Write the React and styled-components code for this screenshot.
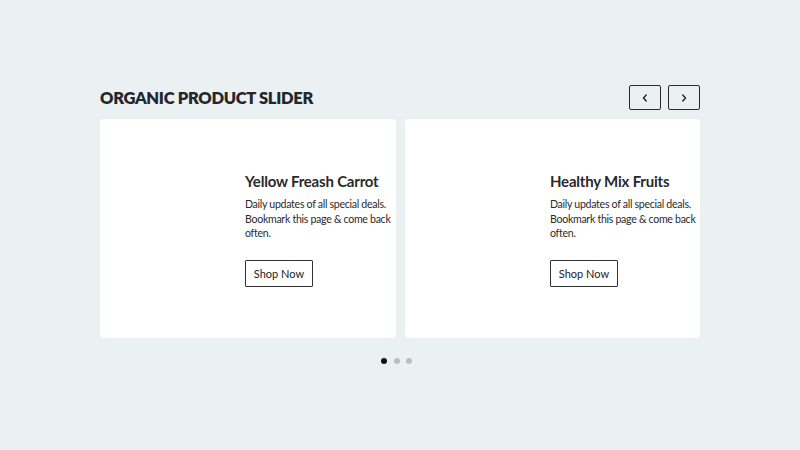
import React, { useState } from 'react';
import styled, { createGlobalStyle } from 'styled-components';

const products = [
  { id: 1, name: 'Yellow Freash Carrot', text: 'Daily updates of all special deals. Bookmark this page & come back often.' },
  { id: 2, name: 'Healthy Mix Fruits', text: 'Daily updates of all special deals. Bookmark this page & come back often.' },
  { id: 3, name: 'Fresh Green Apple', text: 'Daily updates of all special deals. Bookmark this page & come back often.' },
  { id: 4, name: 'Organic Tomato', text: 'Daily updates of all special deals. Bookmark this page & come back often.' },
];

const GlobalStyle = createGlobalStyle`
  body { margin: 0; background: #ebf0f3; font-family: Lato, "Open Sans", sans-serif; color: #222; }
`;

const Page = styled.div`
  width: 600px; margin: 0 auto; padding-top: 85px;
`;

const Header = styled.div`
  display: flex; align-items: center; justify-content: space-between; height: 25px;
`;

const Title = styled.h2`
  margin: 0; font-size: 16.5px; font-weight: 800; text-transform: uppercase; color: #23272b;
  letter-spacing: -0.3px; padding-top: 1px;
`;

const Nav = styled.div`
  display: flex; gap: 7px;
`;

const NavButton = styled.button`
  width: 32px; height: 25px; padding: 0; display: flex; align-items: center; justify-content: center;
  background: transparent; border: 1.5px solid #2a2a2a; border-radius: 2px; cursor: pointer; color: #222;
`;

const Track = styled.div`
  display: grid; grid-template-columns: 296px 295px; gap: 9px; margin-top: 9px;
`;

const Card = styled.div`
  background: #fff; border-radius: 4px; height: 219px;
  display: flex; align-items: center; padding-left: 145px; box-sizing: border-box;
`;

const Body = styled.div`
  display: flex; flex-direction: column; align-items: flex-start; padding-top: 2px;
`;

const Name = styled.h3`
  margin: 0 0 7px; font-size: 15px; font-weight: 700; color: #2a2a2a; letter-spacing: -0.2px;
`;

const Text = styled.p`
  margin: 0; font-size: 10.6px; line-height: 14.5px; color: #2a2a2a; width: 152px; letter-spacing: -0.3px;
`;

const ShopButton = styled.button`
  margin-top: 19px; width: 68px; height: 27px; padding: 0; background: #fff;
  border: 1.5px solid #333; border-radius: 1px; font-family: inherit; font-size: 11px; color: #222; cursor: pointer;
`;

const Dots = styled.div`
  display: flex; justify-content: center; gap: 6.5px; margin-top: 20px; padding-right: 7px;
`;

const Dot = styled.span`
  width: 6px; height: 6px; border-radius: 50%;
  background: ${p => (p.$active ? '#111' : '#bdbdbd')};
`;

const Chevron = ({ dir }) => (
  <svg width="10" height="10" viewBox="0 0 10 10" fill="none" stroke="#222" strokeWidth="1.4" strokeLinecap="round" strokeLinejoin="round">
    {dir === 'left' ? <path d="M6.2 2 3.5 5l2.7 3" /> : <path d="M3.8 2 6.5 5 3.8 8" />}
  </svg>
);

export default function App() {
  const [page, setPage] = useState(0);
  const shown = products.slice(page * 2, page * 2 + 2);

  return (
    <Page>
      <GlobalStyle />
      <Header>
        <Title>Organic Product Slider</Title>
        <Nav>
          <NavButton onClick={() => setPage(p => Math.max(0, p - 1))}><Chevron dir="left" /></NavButton>
          <NavButton onClick={() => setPage(p => Math.min(2, p + 1))}><Chevron dir="right" /></NavButton>
        </Nav>
      </Header>
      <Track>
        {(shown.length ? shown : products.slice(0, 2)).map(item => (
          <Card key={item.id}>
            <Body>
              <Name>{item.name}</Name>
              <Text>{item.text}</Text>
              <ShopButton>Shop Now</ShopButton>
            </Body>
          </Card>
        ))}
      </Track>
      <Dots>
        {[0, 1, 2].map(i => <Dot key={i} $active={i === page} onClick={() => setPage(i)} />)}
      </Dots>
    </Page>
  );
}
